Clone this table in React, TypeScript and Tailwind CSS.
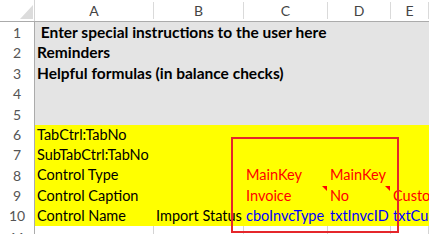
import React from 'react'

const cols = [
  { label: 'A', w: 'w-[119px]' },
  { label: 'B', w: 'w-[90px]' },
  { label: 'C', w: 'w-[84px]' },
  { label: 'D', w: 'w-[63px]' },
  { label: 'E', w: 'flex-1' },
]

const notes = [
  { n: 1, text: ' Enter special instructions to the user here', h: 'h-[21px]' },
  { n: 2, text: 'Reminders', h: 'h-[20px]' },
  { n: 3, text: 'Helpful formulas (in balance checks)', h: 'h-[21px]' },
  { n: 4, text: '', h: 'h-[20px]' },
  { n: 5, text: '', h: 'h-[21px]' },
]

type Cell = { text: string; color?: string; note?: boolean }

const props: { n: number; h: string; cells: Cell[] }[] = [
  { n: 6, h: 'h-[20px]', cells: [{ text: 'TabCtrl:TabNo' }] },
  { n: 7, h: 'h-[20px]', cells: [{ text: 'SubTabCtrl:TabNo' }] },
  {
    n: 8,
    h: 'h-[21px]',
    cells: [
      { text: 'Control Type' },
      { text: '' },
      { text: 'MainKey', color: 'text-[#ff0000]' },
      { text: 'MainKey', color: 'text-[#ff0000]' },
    ],
  },
  {
    n: 9,
    h: 'h-[20px]',
    cells: [
      { text: 'Control Caption' },
      { text: '' },
      { text: 'Invoice', color: 'text-[#ff0000]', note: true },
      { text: 'No', color: 'text-[#ff0000]', note: true },
      { text: 'Customer', color: 'text-[#ff0000]' },
    ],
  },
  {
    n: 10,
    h: 'h-[20px]',
    cells: [
      { text: 'Control Name' },
      { text: 'Import Status' },
      { text: 'cboInvcType', color: 'text-[#0000ff]' },
      { text: 'txtInvcID', color: 'text-[#0000ff]' },
      { text: 'txtCustomer', color: 'text-[#0000ff]' },
    ],
  },
]

function RowNum({ n }: { n: number }) {
  return (
    <div className="w-[35px] shrink-0 border-r border-[#ababab] flex items-center justify-center text-[14px] text-[#555]">
      {n}
    </div>
  )
}

export default function App() {
  return (
    <div className="relative w-[429px] h-[246px] bg-white overflow-hidden font-['Lato',sans-serif] leading-none">
      {/* column headers */}
      <div className="flex h-[22px] border-b border-[#ababab]">
        <div className="w-[35px] shrink-0 border-r border-[#d4d4d4] relative">
          <svg className="absolute left-[20px] top-[5px]" width="13" height="14" viewBox="0 0 13 14">
            <polygon points="13,0 13,14 0,14" fill="#dcdcdc" />
          </svg>
        </div>
        {cols.map((c) => (
          <div
            key={c.label}
            className={`${c.w} shrink-0 border-r border-[#dadada] my-[2px] flex items-center justify-center text-[14px] text-[#444]`}
          >
            {c.label}
          </div>
        ))}
      </div>

      {/* instruction rows */}
      {notes.map((r) => (
        <div key={r.n} className={`flex ${r.h}`}>
          <RowNum n={r.n} />
          <div className="flex-1 bg-[#e4e4e4] flex items-center pl-[2px] text-[15.5px] font-bold text-black whitespace-pre overflow-hidden">
            {r.text}
          </div>
        </div>
      ))}

      {/* control property rows */}
      {props.map((r) => (
        <div key={r.n} className={`flex ${r.h}`}>
          <RowNum n={r.n} />
          <div className="flex-1 bg-[#ffff00] flex overflow-hidden">
            {cols.map((c, i) => {
              const cell = r.cells[i]
              return (
                <div
                  key={c.label}
                  className={`${c.w} shrink-0 relative flex items-center pl-[2px] text-[14.5px] whitespace-nowrap ${cell?.color ?? 'text-black'}`}
                >
                  {cell?.text}
                  {cell?.note && (
                    <svg className="absolute right-[1px] top-0" width="5" height="5" viewBox="0 0 5 5">
                      <polygon points="0,0 5,0 5,5" fill="#ff0000" />
                    </svg>
                  )}
                </div>
              )
            })}
          </div>
        </div>
      ))}

      {/* row 11, cut off */}
      <div className="flex h-[8px] overflow-hidden">
        <div className="w-[35px] shrink-0 border-r border-[#ababab] flex justify-center pt-[5px] text-[14px] text-[#555]">
          11
        </div>
        {cols.map((c) => (
          <div key={c.label} className={`${c.w} shrink-0 border-r border-[#d4d4d4]`} />
        ))}
      </div>

      {/* highlight box */}
      <div className="absolute left-[231px] top-[137px] w-[168px] h-[96px] border-2 border-[#e5262b]" />
    </div>
  )
}
